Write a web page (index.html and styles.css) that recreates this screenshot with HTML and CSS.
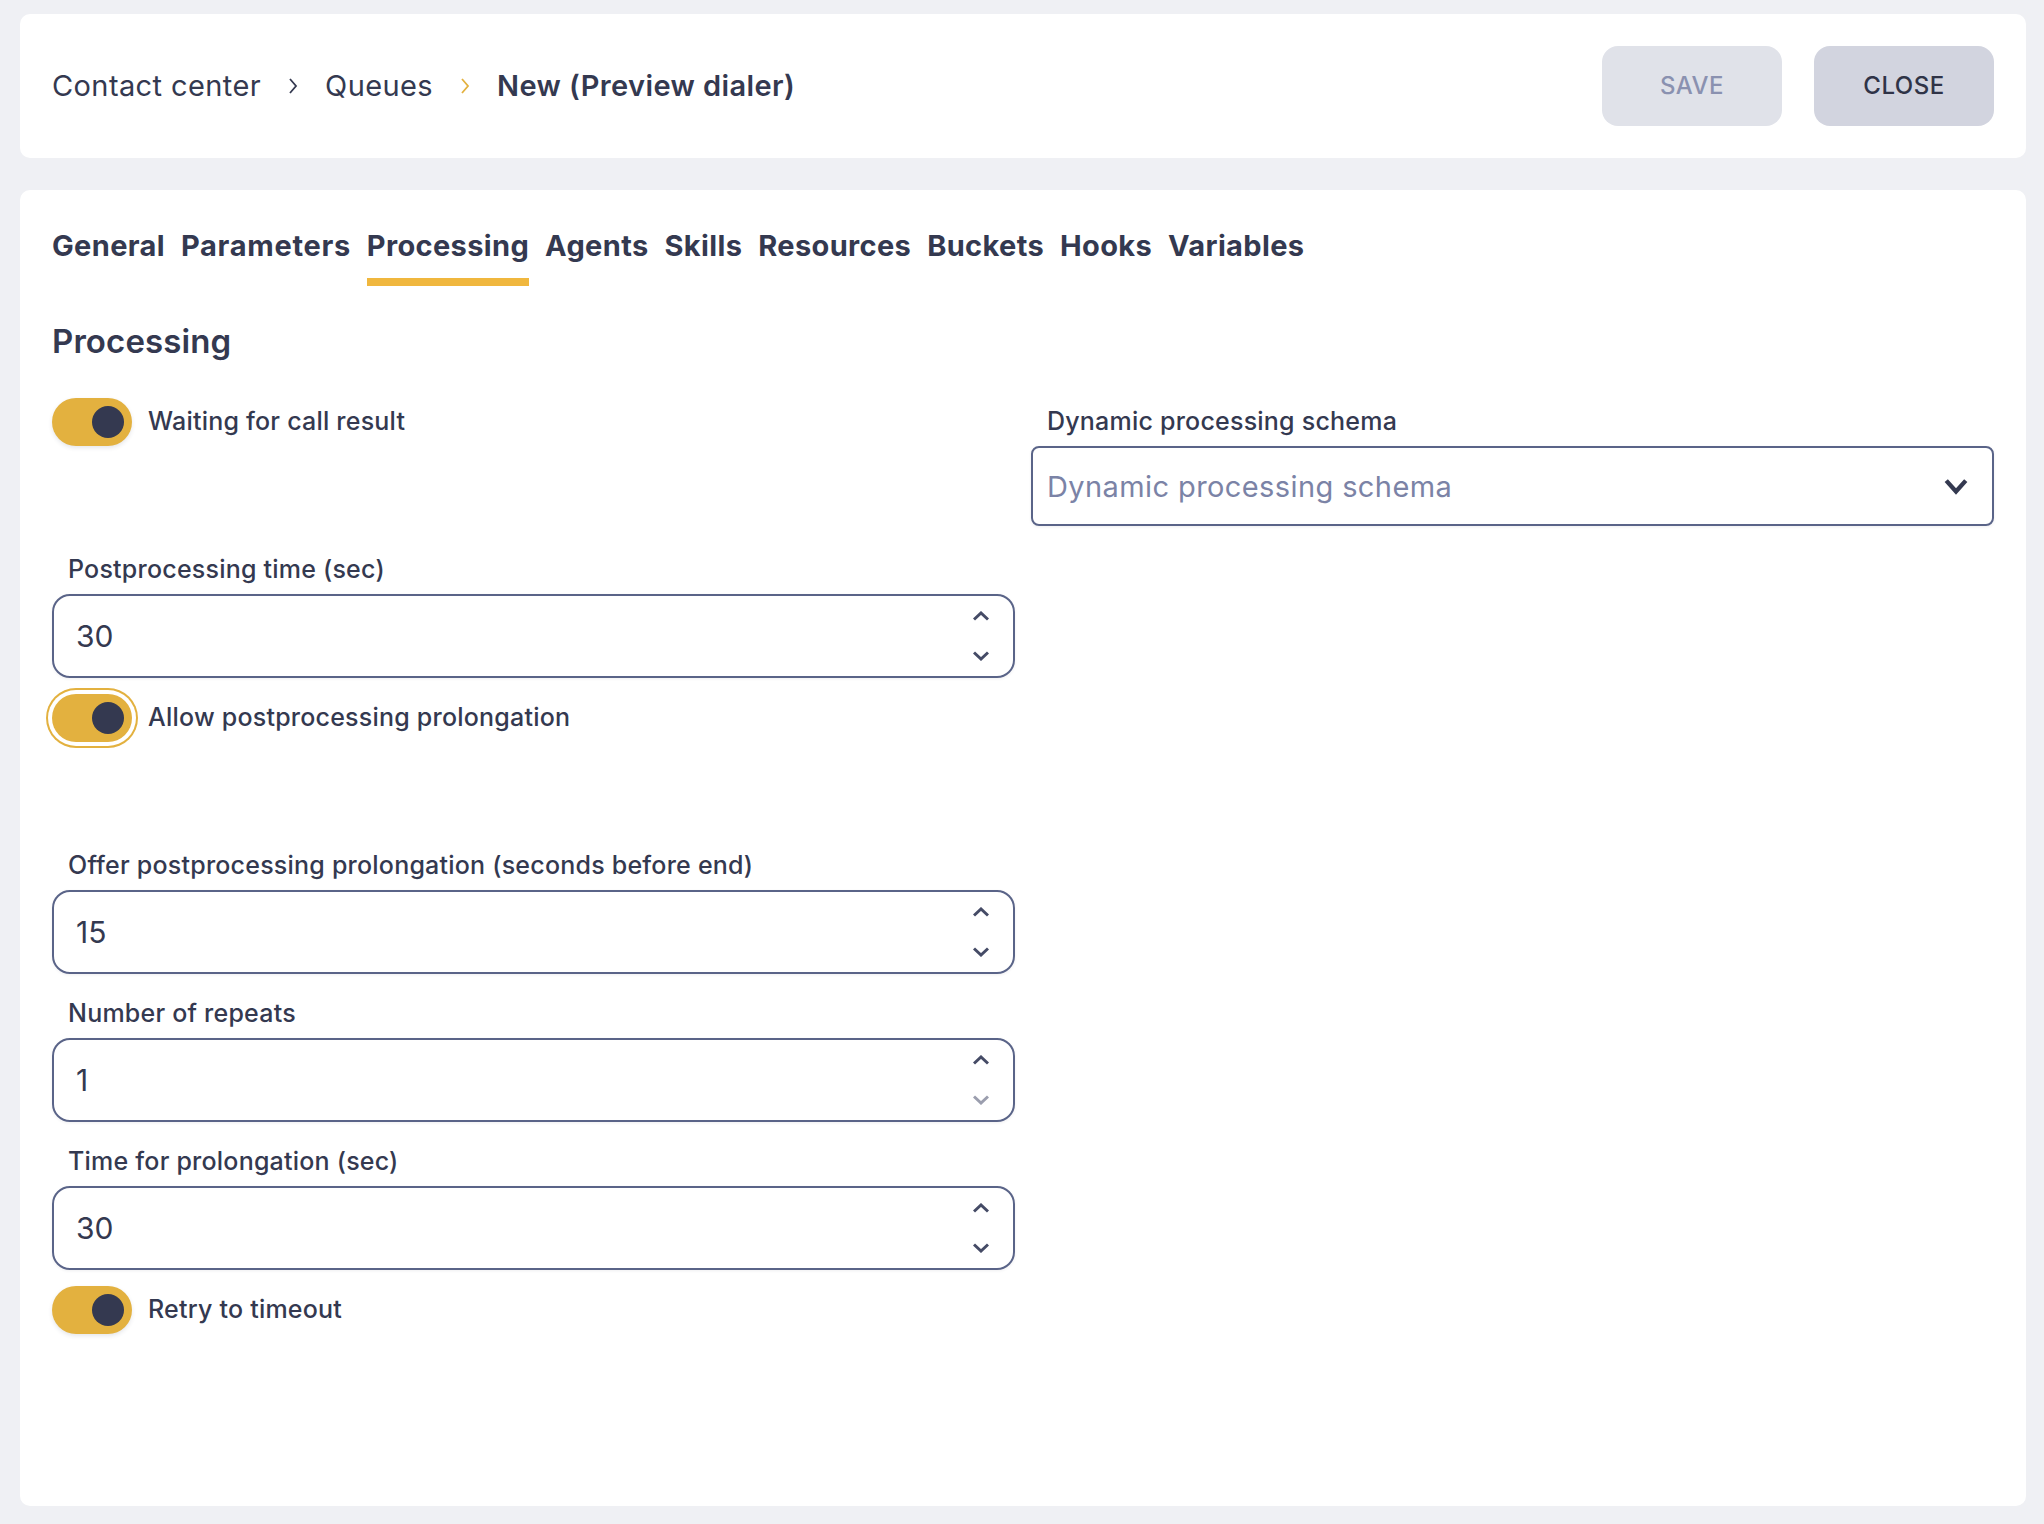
FILE: index.html
```html
<!DOCTYPE html>
<html lang="en">
  <head>
    <meta charset="UTF-8" />
    <title>New (Preview dialer)</title>
    <link rel="stylesheet" href="styles.css">
  </head>
  <body>
    <header class="top-bar">
      <nav class="crumbs">
        <span class="crumb">Contact center</span>
        <svg class="crumb-arrow" viewBox="0 0 10 16"><path d="M2 1l6 7-6 7" /></svg>
        <span class="crumb">Queues</span>
        <svg class="crumb-arrow crumb-arrow-last" viewBox="0 0 10 16"><path d="M2 1l6 7-6 7" /></svg>
        <span class="crumb crumb-current">New (Preview dialer)</span>
      </nav>
      <div class="actions">
        <button class="btn btn-save" disabled>SAVE</button>
        <button class="btn btn-close">CLOSE</button>
      </div>
    </header>

    <main class="panel">
      <div class="tabs">
        <a class="tab">General</a>
        <a class="tab tab-wide">Parameters</a>
        <a class="tab tab-active">Processing</a>
        <a class="tab">Agents</a>
        <a class="tab">Skills</a>
        <a class="tab">Resources</a>
        <a class="tab">Buckets</a>
        <a class="tab">Hooks</a>
        <a class="tab">Variables</a>
      </div>

      <h2 class="section-title">Processing</h2>

      <div class="form-grid">
        <div class="toggle-row">
          <span class="switch"></span>
          <span class="toggle-label">Waiting for call result</span>
        </div>
        <div class="field">
          <label class="field-label">Dynamic processing schema</label>
          <div class="select">
            <span class="select-text">Dynamic processing schema</span>
            <svg class="select-arrow" viewBox="0 0 24 16"><path d="M3 3l9 10 9-10" /></svg>
          </div>
        </div>

        <div class="field">
          <label class="field-label">Postprocessing time (sec)</label>
          <div class="number">
            <span class="number-value">30</span>
            <span class="spin">
              <svg viewBox="0 0 16 10"><path d="M1 8.500L8 2l7 6.500" /></svg>
              <svg viewBox="0 0 16 10"><path d="M1 1.500L8 8l7-6.500" /></svg>
            </span>
          </div>
        </div>
        <div></div>

        <div class="toggle-row">
          <span class="switch switch-focus"></span>
          <span class="toggle-label">Allow postprocessing prolongation</span>
        </div>
        <div></div>

        <div class="field">
          <label class="field-label">Offer postprocessing prolongation (seconds before end)</label>
          <div class="number">
            <span class="number-value">15</span>
            <span class="spin">
              <svg viewBox="0 0 16 10"><path d="M1 8.500L8 2l7 6.500" /></svg>
              <svg viewBox="0 0 16 10"><path d="M1 1.500L8 8l7-6.500" /></svg>
            </span>
          </div>
        </div>
        <div></div>

        <div class="field">
          <label class="field-label">Number of repeats</label>
          <div class="number">
            <span class="number-value">1</span>
            <span class="spin">
              <svg viewBox="0 0 16 10"><path d="M1 8.500L8 2l7 6.500" /></svg>
              <svg class="spin-off" viewBox="0 0 16 10"><path d="M1 1.500L8 8l7-6.500" /></svg>
            </span>
          </div>
        </div>
        <div></div>

        <div class="field">
          <label class="field-label">Time for prolongation (sec)</label>
          <div class="number">
            <span class="number-value">30</span>
            <span class="spin">
              <svg viewBox="0 0 16 10"><path d="M1 8.500L8 2l7 6.500" /></svg>
              <svg viewBox="0 0 16 10"><path d="M1 1.500L8 8l7-6.500" /></svg>
            </span>
          </div>
        </div>
        <div></div>

        <div class="toggle-row">
          <span class="switch"></span>
          <span class="toggle-label">Retry to timeout</span>
        </div>
      </div>
    </main>
  </body>
</html>
```

FILE: styles.css
```css
:root {
  --ink: #343950;
  --line: #5a6488;
  --gold: #e3b13f;
}
* {
  box-sizing: border-box;
}
body {
  margin: 0;
  height: 1524px;
  padding: 14px 18px 18px 20px;
  display: flex;
  flex-direction: column;
  gap: 32px;
  background: #eff0f4;
  color: var(--ink);
  font-family: "Inter", "Liberation Sans", sans-serif;
}

/* top bar */
.top-bar {
  height: 144px;
  padding: 0 32px 1px;
  display: flex;
  justify-content: space-between;
  align-items: center;
  background: #fff;
  border-radius: 10px;
}
.crumbs {
  display: flex;
  align-items: center;
  font-size: 29px;
}
.crumb {
  letter-spacing: 0.4px;
}
.crumb-current {
  font-weight: 600;
}
.crumb-arrow {
  width: 10px;
  height: 16px;
  margin: 0 27px;
  fill: none;
  stroke: var(--ink);
  stroke-width: 1.8;
}
.crumb-arrow-last {
  stroke: var(--gold);
}
.actions {
  display: flex;
  gap: 32px;
}
.btn {
  width: 180px;
  height: 80px;
  border: 0;
  border-radius: 16px;
  font-family: inherit;
  font-size: 24px;
  font-weight: 500;
  letter-spacing: 0.5px;
}
.btn-save {
  background: #e0e2e9;
  color: #8a91b0;
}
.btn-close {
  background: #d2d4df;
  color: #2f3347;
}

/* main panel */
.panel {
  flex: 1;
  padding: 32px 31px 0 32px;
  background: #fff;
  border-radius: 10px;
}
.tabs {
  display: flex;
  gap: 16px;
  height: 64px;
}
.tab {
  font-size: 29px;
  font-weight: 700;
  line-height: 48px;
  letter-spacing: 0.35px;
}
.tab-wide {
  letter-spacing: 0.7px;
}
.tab-active {
  height: 64px;
  border-bottom: 8px solid #f0b73e;
}
.section-title {
  margin: 28px 0 0;
  height: 54px;
  font-size: 33px;
  font-weight: 600;
  line-height: 54px;
  letter-spacing: 0.1px;
}

.form-grid {
  margin-top: 30px;
  display: grid;
  grid-template-columns: 963px 963px;
  grid-auto-rows: 132px;
  column-gap: 16px;
  row-gap: 16px;
}
.toggle-row {
  display: flex;
  align-items: flex-start;
  gap: 16px;
}
.switch {
  width: 80px;
  height: 48px;
  border-radius: 24px;
  padding: 8px;
  display: flex;
  justify-content: flex-end;
  background: var(--gold);
  box-shadow: 0 2px 4px rgba(52, 57, 80, 0.12);
}
.switch::after {
  content: "";
  width: 32px;
  height: 32px;
  border-radius: 50%;
  background: var(--ink);
}
.switch-focus {
  box-shadow: 0 0 0 4px #fff, 0 0 0 6px var(--gold);
}
.toggle-label,
.field-label {
  font-size: 25px;
  font-weight: 500;
  line-height: 47px;
  letter-spacing: 0.22px;
}
.field-label {
  display: block;
  padding: 0 0 1px 16px;
}

.number,
.select {
  display: flex;
  align-items: center;
  justify-content: space-between;
  border: 2.5px solid var(--line);
  box-shadow: 0 1px 3px rgba(52, 57, 80, 0.08);
}
.number {
  height: 84px;
  padding: 0 24px 0 22px;
  border-radius: 18px;
}
.number-value {
  font-size: 30px;
}
.spin {
  display: flex;
  flex-direction: column;
  gap: 30px;
}
.spin svg {
  display: block;
  width: 16px;
  height: 10px;
  fill: none;
  stroke: #454b66;
  stroke-width: 3;
}
.spin .spin-off {
  stroke: #9b9eae;
}
.select {
  height: 80px;
  padding: 0 23px 0 14px;
  border-radius: 8px;
}
.select-text {
  font-size: 29px;
  letter-spacing: 0.4px;
  color: #7b83a6;
}
.select-arrow {
  width: 26px;
  height: 18px;
  fill: none;
  stroke: var(--ink);
  stroke-width: 4;
}
```
